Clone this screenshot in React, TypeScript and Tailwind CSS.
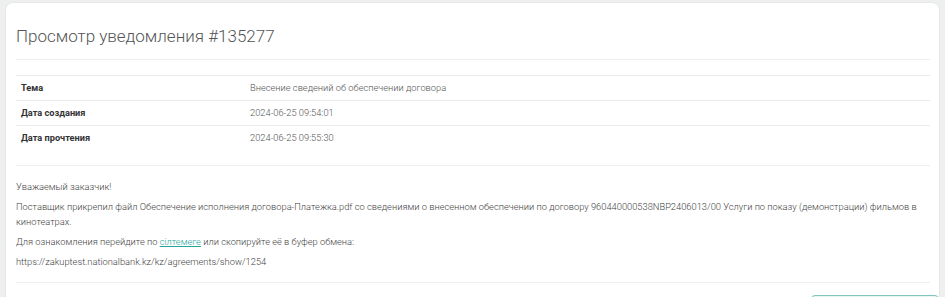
import React from "react";

const rows = [
  { label: "Тема", value: "Внесение сведений об обеспечении договора" },
  { label: "Дата создания", value: "2024-06-25 09:54:01" },
  { label: "Дата прочтения", value: "2024-06-25 09:55:30" },
];

export default function App() {
  return (
    <div className="h-[297px] overflow-hidden bg-[#eef0f0] pl-[5px] pr-[5px] pt-[2px] font-['Roboto',sans-serif]">
      <div className="rounded-lg border border-[#e6e8e8] bg-white pl-[10px] pr-[9px] pt-[20px]">
        <h1 className="text-[17px] font-light leading-[26px] text-[#555]">Просмотр уведомления #135277</h1>
        <hr className="mt-[10px] border-[#eeeeee]" />

        <table className="mt-[15px] w-full">
          <tbody>
            {rows.map((r) => (
              <tr key={r.label} className="h-[25px] border-t border-[#eaeaea]">
                <td className="w-[234px] pl-[5px] text-[9.2px] font-bold text-[#333]">{r.label}</td>
                <td className="text-[9.3px] font-light text-[#555]">{r.value}</td>
              </tr>
            ))}
          </tbody>
        </table>

        <hr className="mt-[14px] border-[#eeeeee]" />

        <div className="mt-[13px] flex flex-col gap-[5px] text-[9.3px] font-light leading-[15px] text-[#444]">
          <p>Уважаемый заказчик!</p>
          <p>
            Поставщик прикрепил файл Обеспечение исполнения договора-Платежка.pdf со сведениями о внесенном обеспечении
            по договору 960440000538NBP2406013/00 Услуги по показу (демонстрации) фильмов в кинотеатрах.
          </p>
          <p>
            Для ознакомления перейдите по{" "}
            <a href="#" className="text-[#26a69a] underline">
              сілтемеге
            </a>{" "}
            или скопируйте её в буфер обмена:
          </p>
          <p>https://zakuptest.nationalbank.kz/kz/agreements/show/1254</p>
        </div>

        <hr className="mt-[13px] border-[#eeeeee]" />

        <div className="mt-[12px] flex justify-end">
          <button className="-mr-[9px] h-[30px] w-[128px] rounded-t border border-[#7fc4bd] bg-[#e8f5f3]" />
        </div>
      </div>
    </div>
  );
}
